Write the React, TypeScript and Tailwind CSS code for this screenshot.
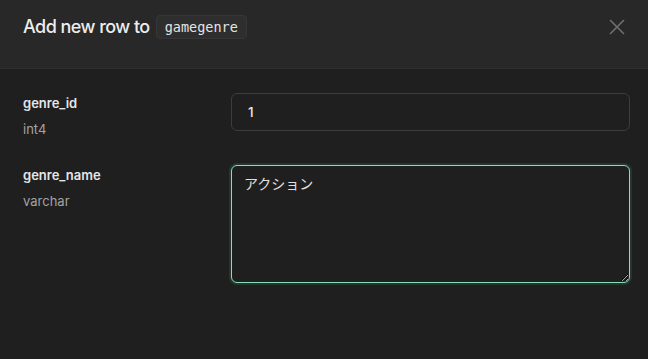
import { X } from "lucide-react";

const fields = [
  { name: "genre_id", type: "int4", value: "1", multiline: false },
  { name: "genre_name", type: "varchar", value: "アクション", multiline: true },
];

export default function App() {
  return (
    <div className="w-[648px] h-[359px] overflow-hidden bg-[#1f1f1f] font-['Inter','Noto_Sans_CJK_JP',sans-serif]">
      {/* Header */}
      <div className="h-[69px] bg-[#282828] border-b border-[#2e2e2e] pl-[23px] pr-[18px] pt-[15px]">
        <div className="flex items-center justify-between h-6">
          <div className="flex items-center gap-[6px]">
            <h2 className="text-[18px] leading-6 font-medium text-[#ededed] tracking-[-0.03em]">Add new row to</h2>
            <code className="h-6 flex items-center px-2 rounded-[4px] bg-[#2e2e2e] border border-[#363636] text-[13.5px] text-[#e4e4e4] font-['DejaVu_Sans_Mono',monospace]">
              gamegenre
            </code>
          </div>
          <button className="text-[#707070]">
            <X size={26} strokeWidth={1.5} />
          </button>
        </div>
      </div>

      {/* Body */}
      <div className="pl-[23px] pr-[18px] pt-6 flex flex-col gap-[26px]">
        {fields.map((f) => (
          <div key={f.name} className="flex">
            <div className="w-[208px] shrink-0">
              <div className="text-[13px] leading-5 font-semibold text-[#e6e6e6]">{f.name}</div>
              <div className="mt-[6px] text-[13px] leading-5 text-[#a3a3a3]">{f.type}</div>
            </div>
            {f.multiline ? (
              <textarea
                defaultValue={f.value}
                className="flex-1 h-[118px] rounded-[6px] bg-[#1f1f1f] border border-[#86dfb6] shadow-[0_0_0_2px_rgba(62,207,142,0.14)] px-3 py-[7px] text-[14px] leading-5 text-[#e0e0e0] outline-none font-['Noto_Sans_CJK_JP','Inter',sans-serif]"
              />
            ) : (
              <input
                defaultValue={f.value}
                className="flex-1 h-[38px] rounded-[6px] bg-[#1f1f1f] border border-[#3d3d3d] px-4 text-[13.5px] font-medium text-[#e6e6e6] outline-none"
              />
            )}
          </div>
        ))}
      </div>
    </div>
  );
}
